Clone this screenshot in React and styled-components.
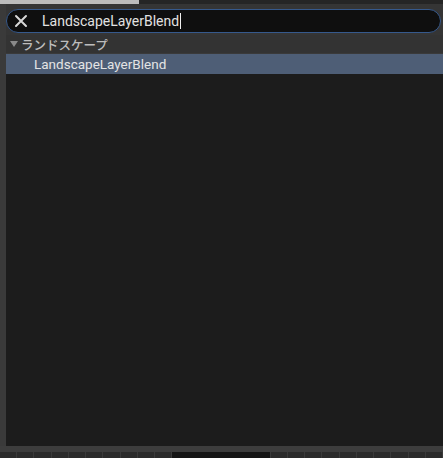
import React from 'react';
import styled, { createGlobalStyle } from 'styled-components';

const GlobalStyle = createGlobalStyle`
  html, body {
    margin: 0;
    padding: 0;
    background: #1c1c1c;
  }
  body {
    font-family: Roboto, "Noto Sans", "Noto Sans CJK JP", sans-serif;
  }
`;

const Frame = styled.div`
  width: 443px;
  height: 458px;
  display: flex;
  flex-direction: column;
  overflow: hidden;
  background: #3a3a3a;
`;

const TopStrip = styled.div`
  height: 4px;
  display: flex;
  flex-shrink: 0;
`;

const StripPiece = styled.div`
  width: ${(p) => p.width || 'auto'};
  flex: ${(p) => (p.width ? 'none' : 1)};
  background: ${(p) => p.color};
`;

const Panel = styled.div`
  flex: 1;
  display: flex;
  flex-direction: column;
  padding-left: 6px;
  background: #3a3a3a;
  min-height: 0;
`;

const Header = styled.div`
  background: #353535;
  padding: 5px 2px 2px 0;
`;

const SearchBox = styled.div`
  height: 22px;
  display: flex;
  align-items: center;
  border: 1.5px solid #36598c;
  border-radius: 12px;
  background: #0f0f0f;
  padding-left: 6px;
`;

const ClearButton = styled.div`
  width: 16px;
  height: 16px;
  display: flex;
  align-items: center;
  justify-content: center;
  color: #d8d8d8;
`;

const SearchText = styled.span`
  margin-left: 13px;
  font-size: 14px;
  color: #e2e2e2;
`;

const Caret = styled.span`
  display: inline-block;
  width: 1px;
  height: 16px;
  margin-left: 1px;
  background: #f0f0f0;
  vertical-align: -3px;
`;

const CategoryRow = styled.div`
  height: 18px;
  display: flex;
  align-items: center;
  background: #333333;
  padding-left: 4px;
  font-size: 12.5px;
  font-weight: 500;
  color: #bdbdbd;
`;

const Arrow = styled.span`
  width: 0;
  height: 0;
  border-left: 4.5px solid transparent;
  border-right: 4.5px solid transparent;
  border-top: 6px solid #8a8a8a;
  margin-right: 3px;
`;

const ItemRow = styled.div`
  height: 20px;
  display: flex;
  align-items: center;
  padding-left: 28px;
  margin-top: 1px;
  background: ${(p) => (p.selected ? '#4e5e76' : 'transparent')};
  font-size: 13.5px;
  color: #e4e4e4;
`;

const List = styled.div`
  flex: 1;
  background: #1c1c1c;
`;

const BottomBorder = styled.div`
  height: 6px;
  flex-shrink: 0;
  background: #3d3d3d;
`;

const Ruler = styled.div`
  height: 6px;
  flex-shrink: 0;
  display: flex;
  background: #2a2a2a;
`;

const RulerCell = styled.div`
  flex: ${(p) => p.grow || 1};
  border-right: 1px solid #3a3a3a;
  background: ${(p) => (p.dark ? '#151515' : '#2b2b2b')};
`;

const rulerCells = [
  { grow: 1 }, { grow: 1 }, { grow: 1 }, { grow: 1 }, { grow: 1 },
  { grow: 1 }, { grow: 1 }, { grow: 1 }, { grow: 1 }, { grow: 1 },
  { grow: 6, dark: true },
  { grow: 1 }, { grow: 1 }, { grow: 1 }, { grow: 1 }, { grow: 1 },
  { grow: 1 }, { grow: 1 }, { grow: 1 }, { grow: 1 }, { grow: 1 },
];

export default function App() {
  return (
    <>
      <GlobalStyle />
      <Frame>
        <TopStrip>
          <StripPiece width="139px" color="#bcbcbc" />
          <StripPiece color="#252525" />
        </TopStrip>
        <Panel>
          <Header>
            <SearchBox>
              <ClearButton>
                <svg width="14" height="14" viewBox="0 0 14 14">
                  <path d="M2 2 L12 12 M12 2 L2 12" stroke="currentColor" strokeWidth="2" strokeLinecap="round" />
                </svg>
              </ClearButton>
              <SearchText>
                LandscapeLayerBlend
                <Caret />
              </SearchText>
            </SearchBox>
          </Header>
          <CategoryRow>
            <Arrow />
            ランドスケープ
          </CategoryRow>
          <ItemRow selected>LandscapeLayerBlend</ItemRow>
          <List />
        </Panel>
        <BottomBorder />
        <Ruler>
          {rulerCells.map((c, i) => (
            <RulerCell key={i} grow={c.grow} dark={c.dark} />
          ))}
        </Ruler>
      </Frame>
    </>
  );
}
